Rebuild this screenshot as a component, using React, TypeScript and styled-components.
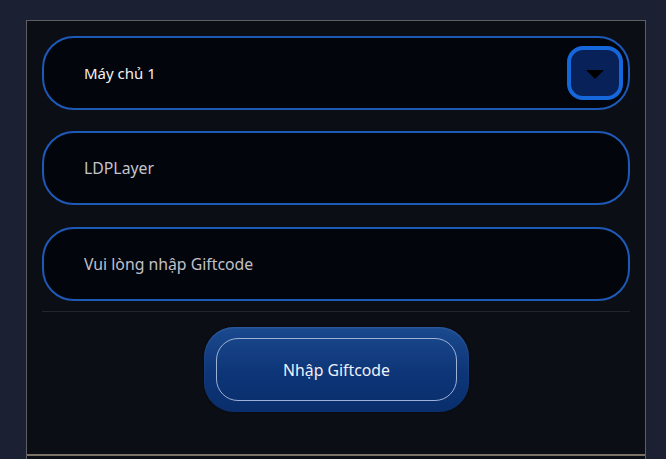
import React from "react";
import styled, { createGlobalStyle } from "styled-components";

const Global = createGlobalStyle`
  html, body { margin: 0; padding: 0; background: #1b2033; }
  body { font-family: "Noto Sans", "Open Sans", sans-serif; overflow: hidden; }
  * { box-sizing: border-box; }
`;

const Page = styled.div`
  height: 459px;
  padding: 20px 20px 0 26px;
`;

const Panel = styled.div`
  width: 620px;
  height: 460px;
  background: #0c0e16;
  border: 1px solid #5f5f63;
  border-bottom: none;
  display: flex;
  flex-direction: column;
`;

const Form = styled.div`
  padding: 15px 15px 0 15px;
  display: flex;
  flex-direction: column;
`;

const Field = styled.div<{ $gap?: number }>`
  height: 74px;
  margin-bottom: ${(p) => p.$gap ?? 21}px;
  border: 2px solid #1d5ab8;
  border-radius: 32px;
  background: #03050c;
  display: flex;
  align-items: center;
  padding-left: 40px;
  padding-right: 5px;
`;

const Value = styled.span`
  flex: 1;
  color: #f1f1f4;
  font-size: 15px;
`;

const TextInput = styled.input`
  flex: 1;
  background: transparent;
  border: none;
  outline: none;
  font-family: inherit;
  font-size: 15.8px;
  color: #c4c4cc;
  padding: 0;
  &::placeholder { color: #c0c0c8; }
`;

const DropButton = styled.div`
  width: 56px;
  height: 54px;
  border: 4px solid #1667dc;
  background: #082158;
  border-radius: 16px;
  display: flex;
  align-items: center;
  justify-content: center;
`;

const Caret = styled.span`
  width: 0;
  height: 0;
  border-left: 9px solid transparent;
  border-right: 9px solid transparent;
  border-top: 9px solid #000;
  margin-top: 3px;
`;

const Rule = styled.div`
  height: 1px;
  background: #25262d;
  margin-top: 10px;
`;

const Actions = styled.div`
  display: flex;
  justify-content: center;
  padding-top: 15px;
  padding-left: 1px;
`;

const SubmitButton = styled.button`
  width: 265px;
  height: 85px;
  padding: 11px 12px;
  border: none;
  border-radius: 30px;
  background: linear-gradient(180deg, #1b4a8e 0%, #0d3577 55%, #0a2e6c 100%);
  box-shadow: inset 0 1px 2px rgba(120, 160, 230, 0.25), 0 0 2px rgba(0, 0, 0, 0.6);
  cursor: pointer;
  font-family: inherit;
`;

const ButtonFace = styled.span`
  display: flex;
  align-items: center;
  justify-content: center;
  width: 100%;
  height: 100%;
  border: 1.5px solid #9db0d6;
  border-radius: 22px;
  color: #eef1f8;
  font-size: 15.8px;
`;

const Footer = styled.div`
  height: 2px;
  background: #7a7265;
  margin-top: 42px;
`;

export default function App() {
  return (
    <>
      <Global />
      <Page>
        <Panel>
          <Form>
            <Field>
              <Value>Máy chủ 1</Value>
              <DropButton>
                <Caret />
              </DropButton>
            </Field>
            <Field $gap={22}>
              <TextInput defaultValue="LDPLayer" />
            </Field>
            <Field $gap={0}>
              <TextInput placeholder="Vui lòng nhập Giftcode" />
            </Field>
            <Rule />
            <Actions>
              <SubmitButton>
                <ButtonFace>Nhập Giftcode</ButtonFace>
              </SubmitButton>
            </Actions>
          </Form>
          <Footer />
        </Panel>
      </Page>
    </>
  );
}
